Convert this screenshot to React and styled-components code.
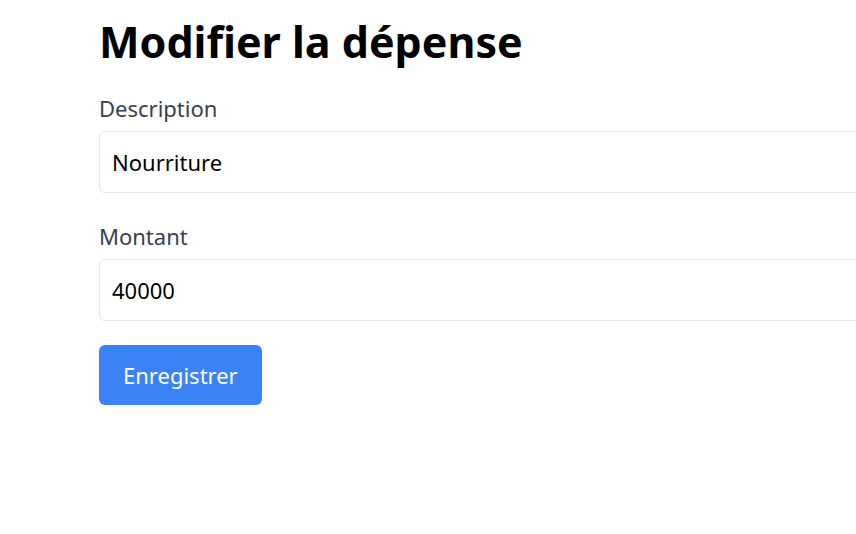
import React from "react";
import styled, { createGlobalStyle } from "styled-components";

const GlobalStyle = createGlobalStyle`
  html, body {
    margin: 0;
    padding: 0;
    background: #ffffff;
    overflow: hidden;
  }
  body {
    font-family: "Noto Sans", "Open Sans", sans-serif;
  }
  * {
    box-sizing: border-box;
  }
`;

const Page = styled.div`
  padding: 12px 0 0 99px;
  width: 1000px;
`;

const Title = styled.h1`
  margin: 0 0 22px 0;
  font-size: 43px;
  line-height: 60px;
  font-weight: 700;
  color: #000000;
`;

const Form = styled.form`
  display: flex;
  flex-direction: column;
  width: 900px;
`;

const Field = styled.div`
  display: flex;
  flex-direction: column;
  margin-bottom: ${(p) => p.$gap}px;
`;

const Label = styled.label`
  font-size: 22px;
  line-height: 28px;
  color: #374151;
  margin-bottom: 9px;
`;

const Input = styled.input`
  font-family: inherit;
  font-size: 22px;
  line-height: 28px;
  height: 62px;
  padding: 16px 12px;
  border: 1px solid #e5e7eb;
  border-radius: 6px;
  color: #000000;
  outline: none;
`;

const Button = styled.button`
  align-self: flex-start;
  font-family: inherit;
  font-size: 22px;
  line-height: 28px;
  height: 60px;
  padding: 0 24px;
  border: none;
  border-radius: 6px;
  background: #3b82f6;
  color: #ffffff;
  cursor: pointer;
`;

const App = () => {
  return (
    <>
      <GlobalStyle />
      <Page>
        <Title>Modifier la dépense</Title>
        <Form onSubmit={(e) => e.preventDefault()}>
          <Field $gap={29}>
            <Label>Description</Label>
            <Input defaultValue="Nourriture" />
          </Field>
          <Field $gap={24}>
            <Label>Montant</Label>
            <Input defaultValue="40000" />
          </Field>
          <Button type="submit">Enregistrer</Button>
        </Form>
      </Page>
    </>
  );
};

export default App;
